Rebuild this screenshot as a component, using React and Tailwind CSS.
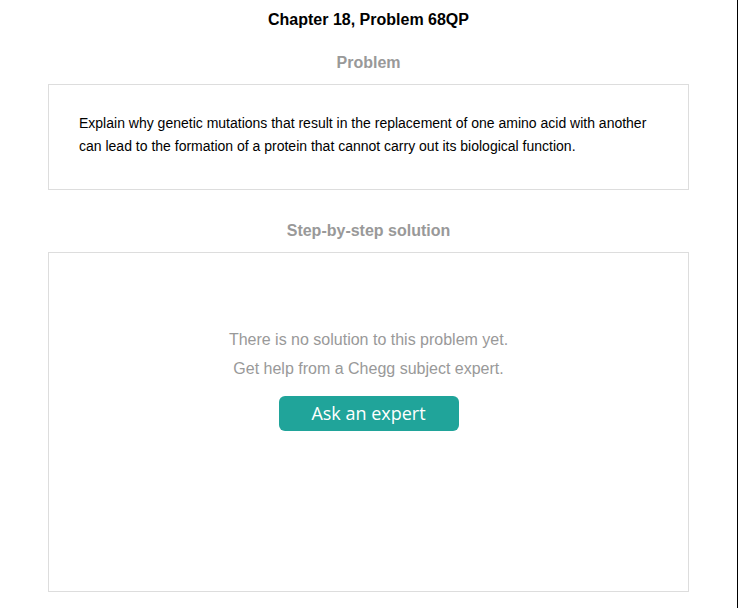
export default function App() {
  return (
    <div className="flex h-[608px] w-[738px] bg-white font-['Liberation_Sans',Arial,sans-serif]">
      <div className="w-[737px] pt-[10px]">
        <h1 className="text-center text-[16px] font-bold leading-[20px] text-black">
          Chapter 18, Problem 68QP
        </h1>
        <h2 className="mt-[23px] text-center text-[16px] font-bold leading-[20px] text-[#999]">
          Problem
        </h2>
        <div className="mx-auto mt-[11px] w-[641px] border border-[#ddd] px-[30px] pt-[27px] pb-[31px]">
          <p className="text-[14px] leading-[23px] text-black">
            Explain why genetic mutations that result in the replacement of one amino acid with another
            can lead to the formation of a protein that cannot carry out its biological function.
          </p>
        </div>
        <h2 className="mt-[31px] text-center text-[16px] font-bold leading-[20px] text-[#999]">
          Step-by-step solution
        </h2>
        <div className="mx-auto mt-[11px] flex h-[340px] w-[641px] flex-col items-center border border-[#ddd] pt-[72px]">
          <p className="text-center text-[16px] leading-[29px] text-[#999]">
            There is no solution to this problem yet.
            <br />
            Get help from a Chegg subject expert.
          </p>
          <button className="mt-[13px] h-[35px] w-[180px] rounded-[6px] bg-[#20a49a] font-['Open_Sans',sans-serif] text-[18px] text-white">
            Ask an expert
          </button>
        </div>
      </div>
      <div className="w-[1px] bg-black" />
    </div>
  );
}
